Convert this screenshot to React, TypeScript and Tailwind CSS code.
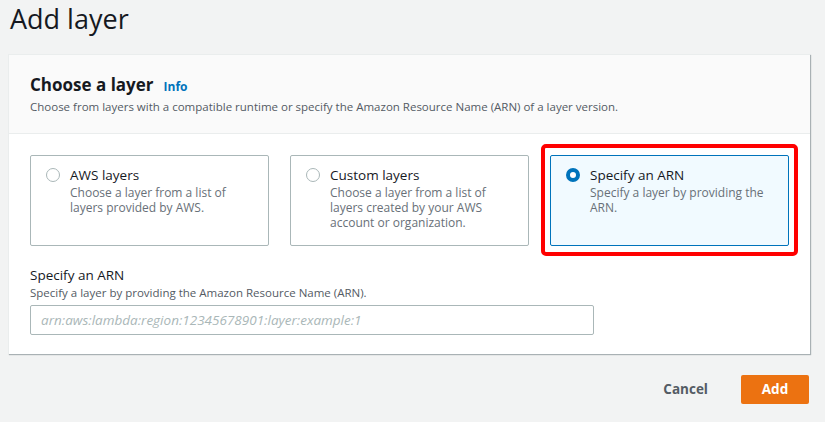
import { useState } from "react";

const options = [
  {
    id: "aws",
    title: "AWS layers",
    desc: "Choose a layer from a list of layers provided by AWS.",
  },
  {
    id: "custom",
    title: "Custom layers",
    desc: "Choose a layer from a list of layers created by your AWS account or organization.",
  },
  {
    id: "arn",
    title: "Specify an ARN",
    desc: "Specify a layer by providing the ARN.",
  },
];

const App = () => {
  const [selected, setSelected] = useState("arn");
  const [arn, setArn] = useState("");

  return (
    <div className="min-h-[422px] w-[825px] bg-[#f2f3f3] font-['Open_Sans',sans-serif] text-[#16191f]">
      <h1 className="h-[54px] pl-[10px] pt-[1px] text-[27px] leading-[36px] text-[#16191f]">Add layer</h1>

      <div className="ml-[8px] w-[802px] border-l border-t border-[#eaeded] bg-white shadow-[1px_1px_1px_0_rgba(0,28,36,0.3)]">
        <div className="h-[79px] border-b border-[#eaeded] bg-[#fafafa] px-[21px] pt-[18px]">
          <div className="flex items-baseline gap-[10px]">
            <h2 className="text-[17px] font-bold leading-[24px]">Choose a layer</h2>
            <a className="text-[12px] font-bold text-[#0073bb]">Info</a>
          </div>
          <p className="mt-[2px] text-[11.5px] leading-[16px] text-[#545b64]">
            Choose from layers with a compatible runtime or specify the Amazon Resource Name (ARN) of a layer version.
          </p>
        </div>

        <div className="px-[21px] pb-[19px] pt-[21px]">
          <div className="flex gap-[21px]">
            {options.map((o) => {
              const on = selected === o.id;
              return (
                <div key={o.id} className="relative">
                  <button
                    onClick={() => setSelected(o.id)}
                    className={`flex h-[91px] w-[239px] gap-[10px] rounded-[2px] border px-[15px] pt-[9px] text-left ${
                      on ? "border-[#0073bb] bg-[#f1faff]" : "border-[#aab7b8] bg-white"
                    }`}
                  >
                    <span
                      className={`mt-[3px] h-[14px] w-[14px] shrink-0 rounded-full ${
                        on ? "border-[4px] border-[#0073bb] bg-white" : "border border-[#aab7b8] bg-white"
                      }`}
                    />
                    <span className="flex w-[180px] flex-col">
                      <span className="text-[13.5px] leading-[20px] text-[#16191f]">{o.title}</span>
                      <span className="text-[12px] leading-[15px] text-[#687078]">{o.desc}</span>
                    </span>
                  </button>
                  {o.id === "arn" && (
                    <div className="pointer-events-none absolute -bottom-[10px] -left-[9px] -right-[9px] -top-[11px] rounded-[5px] border-[4px] border-[#ff0000]" />
                  )}
                </div>
              );
            })}
          </div>

          <div className="mt-[20px]">
            <label className="block text-[13.5px] leading-[18px] text-[#16191f]">Specify an ARN</label>
            <p className="mt-[1px] text-[11.5px] leading-[15px] text-[#545b64]">
              Specify a layer by providing the Amazon Resource Name (ARN).
            </p>
            <input
              value={arn}
              onChange={(e) => setArn(e.target.value)}
              placeholder="arn:aws:lambda:region:12345678901:layer:example:1"
              className="mt-[5px] h-[30px] w-[564px] rounded-[2px] border border-[#aab7b8] bg-white px-[10px] text-[13.5px] placeholder:italic placeholder:text-[#aab7b8] focus:outline-none"
            />
          </div>
        </div>
      </div>

      <div className="mt-[21px] flex w-[809px] justify-end gap-[13px]">
        <button className="h-[29px] px-[20px] text-[13.5px] font-bold text-[#545b64]">Cancel</button>
        <button className="h-[29px] w-[68px] rounded-[2px] bg-[#ec7211] text-[13.5px] font-bold text-white">Add</button>
      </div>
    </div>
  );
};

export default App;
